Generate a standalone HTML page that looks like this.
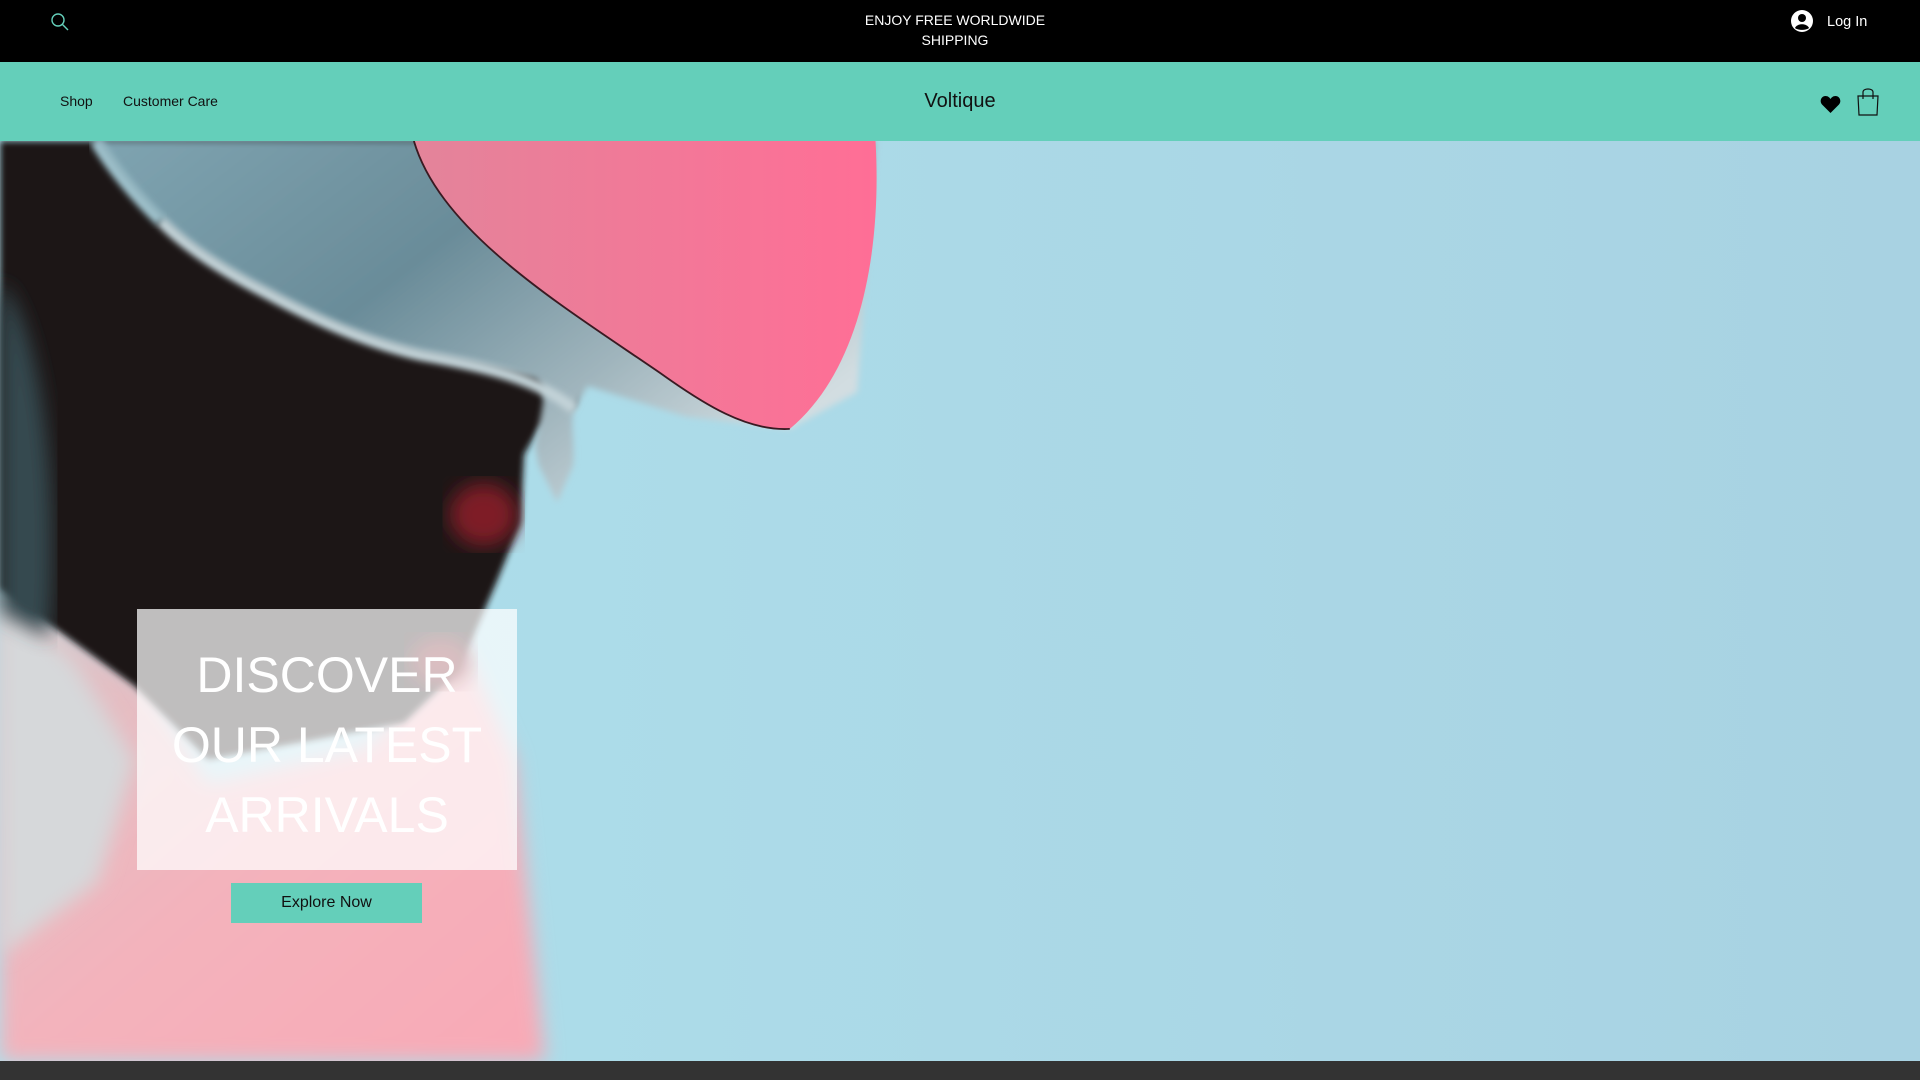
<!DOCTYPE html>
<html><head><meta charset="utf-8"><style>
*{margin:0;padding:0;box-sizing:border-box}
body{width:1920px;height:1080px;overflow:hidden;font-family:"Liberation Sans",Arial,sans-serif;background:#333;position:relative}
.top{position:absolute;left:0;top:0;width:1920px;height:62px;background:#000;color:#fff}
.ship{position:absolute;left:0;width:1910px;top:10px;text-align:center;font-size:14px;line-height:20px}
.login{position:absolute;left:1827px;top:12px;font-size:14.5px;line-height:20px}
.nav{position:absolute;left:0;top:62px;width:1920px;height:79px;background:#64CFBA}
.nav a{position:absolute;top:31px;font-size:14px;color:#111;text-decoration:none}
.logo{position:absolute;left:0;width:1920px;text-align:center;top:28px;font-size:20px;color:#111}
.hero{position:absolute;left:0;top:141px;width:1920px;height:920px;overflow:hidden}
.box{position:absolute;left:137px;top:468px;width:380px;height:261px;background:rgba(255,255,255,0.72);color:#fff;text-align:center;font-size:50px;line-height:70px;padding-top:31px}
.btn{position:absolute;left:231px;top:742px;width:191px;height:40px;background:#64CFBA;color:#111;text-align:center;line-height:40px;font-size:16px}
</style></head><body>
<div class="top">
<svg style="position:absolute;left:50px;top:12px" width="20" height="20" viewBox="0 0 20 20"><circle cx="8" cy="8" r="6" fill="none" stroke="#64CFBA" stroke-width="1.4"/><line x1="12.5" y1="12.5" x2="18" y2="18" stroke="#64CFBA" stroke-width="1.4"/></svg>
<div class="ship">ENJOY FREE WORLDWIDE<br>SHIPPING</div>
<svg style="position:absolute;left:1791px;top:10px" width="22" height="22" viewBox="0 0 22 22"><circle cx="11" cy="11" r="11" fill="#fff"/><circle cx="11" cy="8" r="4" fill="#000"/><path d="M4 18 C6 13 16 13 18 18 C15 20.5 7 20.5 4 18Z" fill="#000"/></svg>
<div class="login">Log In</div>
</div>
<div class="nav">
<a style="left:60px">Shop</a><a style="left:123px">Customer Care</a>
<div class="logo">Voltique</div>
<svg style="position:absolute;left:1820px;top:33px" width="21" height="19" viewBox="0 0 21 19"><path d="M10.5 18 L2 9.5 C-1 6 1.5 1 5.5 1 C8 1 9.5 2.5 10.5 4 C11.5 2.5 13 1 15.5 1 C19.5 1 22 6 19 9.5Z" fill="#000"/></svg>
<svg style="position:absolute;left:1856px;top:25px" width="24" height="30" viewBox="0 0 24 30"><path d="M2 9 H22 L21 28 H3 Z" fill="none" stroke="#111" stroke-width="1.2"/><path d="M7 12 V5 C7 1 17 1 17 5 V12" fill="none" stroke="#111" stroke-width="1.2"/></svg>
</div>
<div class="hero">
<svg width="1920" height="920" viewBox="0 115 1568 751" preserveAspectRatio="none">
<defs>
<linearGradient id="bg" x1="0" x2="1"><stop offset="0" stop-color="#AEE0EC"/><stop offset="1" stop-color="#A8D2E2"/></linearGradient>
<linearGradient id="vis" x1="0" x2="1"><stop offset="0" stop-color="#E3849A"/><stop offset="1" stop-color="#FF6E96"/></linearGradient>
<linearGradient id="hs" x1="0" y1="0" x2="1" y2="0.6"><stop offset="0" stop-color="#7FA4B1"/><stop offset=".45" stop-color="#6A8C99"/><stop offset=".75" stop-color="#9FB4BC"/><stop offset="1" stop-color="#D2DDE1"/></linearGradient>
<linearGradient id="sh" x1="0" y1="0" x2="1" y2="1"><stop offset="0" stop-color="#D8C6C8"/><stop offset=".5" stop-color="#F3B3BC"/><stop offset="1" stop-color="#F9A9B6"/></linearGradient>
<filter id="b"><feGaussianBlur stdDeviation="8"/></filter>
<filter id="b2"><feGaussianBlur stdDeviation="2.5"/></filter>
</defs>
<rect x="0" y="115" width="1568" height="751" fill="url(#bg)"/>
<path d="M0,480 L120,560 L170,640 L300,610 L380,530 L420,620 L445,866 L0,866Z" fill="url(#sh)" filter="url(#b)"/>
<path d="M0,490 L60,540 L110,620 L80,720 L0,780Z" fill="#D6D8DA" filter="url(#b)"/>
<path d="M0,115 L480,115 L470,330 L440,350 L428,371 L425,427 L406,474 L375,546 L330,590 L170,620 L110,560 L0,480Z" fill="#1E1616" filter="url(#b2)"/>
<path d="M0,230 C30,260 50,380 40,520 L0,500Z" fill="#344850" filter="url(#b)"/>
<ellipse cx="395" cy="420" rx="28" ry="26" fill="#7E1A25" filter="url(#b)"/>
<ellipse cx="360" cy="540" rx="25" ry="20" fill="#7A1822" filter="url(#b)"/>
<path d="M78,115 L715,115 L700,320 L645,350 L560,340 L480,315 L469,334 C465,345 470,360 468,380 L455,410 L440,380 L437,365 C440,340 450,320 437,309 C400,300 370,295 344,290 C300,280 260,262 219,240 C180,220 150,200 131,180 C110,160 90,135 78,115Z" fill="url(#hs)" filter="url(#b2)"/>
<path d="M469,334 C440,310 400,300 344,290 C300,280 260,262 219,240 C180,220 150,200 131,180" fill="none" stroke="#C3D3D8" stroke-width="9" filter="url(#b2)"/>
<path d="M78,115 C90,135 110,160 131,180" fill="none" stroke="#9DC0CA" stroke-width="10" filter="url(#b2)"/>
<path d="M338,115 L715,115 C720,200 705,300 645,350 C610,352 575,330 540,305 C460,250 360,190 338,115Z" fill="url(#vis)"/>
<path d="M338,115 C360,190 460,250 540,305 C575,330 610,352 645,350" fill="none" stroke="#3a1a22" stroke-width="1.5"/>
</svg>
<div class="box">DISCOVER<br>OUR LATEST<br>ARRIVALS</div>
<div class="btn">Explore Now</div>
</div>
</body></html>
